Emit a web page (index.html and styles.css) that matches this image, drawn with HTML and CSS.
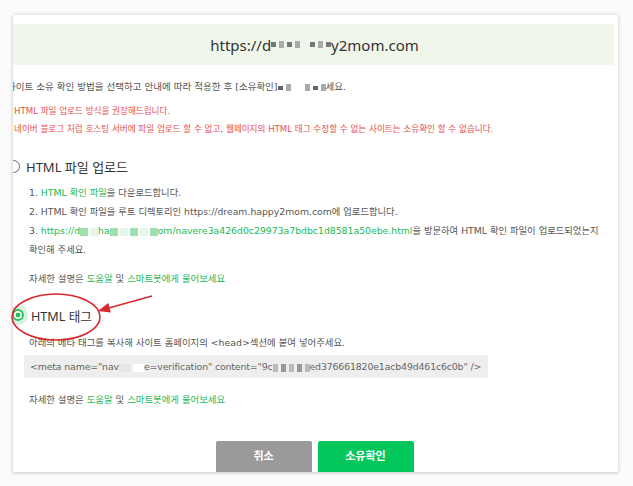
FILE: index.html
```html
<!DOCTYPE html>
<html lang="ko">
<head>
<meta charset="utf-8">
<title>소유확인</title>
<link rel="stylesheet" href="styles.css">
</head>
<body>
<div class="stage">
  <div class="card">
    <div class="site-bar">https://d<span class="redact dark"><i></i><i></i><i></i><i></i>&nbsp;<i></i><i></i><i></i></span>y2mom.com</div>
    <div class="content">
      <p class="intro">사이트 소유 확인 방법을 선택하고 안내에 따라 적용한 후 [소유확인]<span class="redact dark small"><i></i><i></i><i class="sp"></i><i></i><i></i><i></i></span>세요.</p>
      <p class="warn first">HTML 파일 업로드 방식을 권장해드립니다.</p>
      <p class="warn">네이버 블로그 처럼 호스팅 서버에 파일 업로드 할 수 없고, 웹페이지의 HTML 태그 수정할 수 없는 사이트는 소유확인 할 수 없습니다.</p>

      <div class="option first-opt">
        <span class="radio"></span>
        <span class="opt-title">HTML 파일 업로드</span>
      </div>
      <ol class="steps">
        <li>1. <span class="green">HTML 확인 파일</span>을 다운로드합니다.</li>
        <li>2. HTML 확인 파일을 루트 디렉토리인 https://dream.happy2mom.com에 업로드합니다.</li>
        <li>3. <span class="green">https://d<span class="redact lg"><i></i><i></i></span>ha<span class="redact lg"><i></i><i></i><i></i><i></i><i></i></span>om/navere3a426d0c29973a7bdbc1d8581a50ebe.html</span>을 방문하여 HTML 확인 파일이 업로드되었는지 확인해 주세요.</li>
      </ol>
      <p class="help">자세한 설명은 <span class="green">도움말</span> 및 <span class="green">스마트봇에게 물어보세요</span></p>

      <div class="option sel">
        <span class="radio on"></span>
        <span class="opt-title">HTML 태그</span>
      </div>
      <p class="desc">아래의 메타 태그를 복사해 사이트 홈페이지의 &lt;head&gt;섹션에 붙여 넣어주세요.</p>
      <div class="meta-box">&lt;meta name="nav<span class="redact lt"><i></i><i></i></span>e=verification" content="9c<span class="redact mid"><i></i><i></i><i></i><i></i><i></i></span>ed376661820e1acb49d461c6c0b" /&gt;</div>
      <p class="help help2">자세한 설명은 <span class="green">도움말</span> 및 <span class="green">스마트봇에게 물어보세요</span></p>

      <div class="buttons">
        <button class="btn cancel">취소</button>
        <button class="btn ok">소유확인</button>
      </div>
    </div>
  </div>

  <svg class="annot" width="633" height="486" viewBox="0 0 633 486">
    <ellipse cx="56" cy="317" rx="44" ry="23" fill="none" stroke="#d9282f" stroke-width="1.6"/>
    <line x1="152" y1="296" x2="107" y2="308.5" stroke="#d9282f" stroke-width="1.6"/>
    <polygon points="98,311 108.3,303 110.9,312.6" fill="#d9282f"/>
  </svg>
</div>
</body>
</html>
```
FILE: styles.css
```css
* { box-sizing: border-box; }
html, body { margin: 0; padding: 0; }
body {
  background: #fbfbfb;
  font-family: "DejaVu Sans", "Noto Sans CJK KR", sans-serif;
  color: #555;
}
.stage {
  position: relative;
  width: 633px;
  height: 486px;
  padding: 15px 0 0 13px;
  overflow: hidden;
}
.card {
  width: 605px;
  height: 457px;
  background: #fff;
  box-shadow: 0 0 4px rgba(0,0,0,0.18), 0 2px 3px rgba(0,0,0,0.08);
  overflow: hidden;
  padding-top: 9px;
}
.site-bar {
  height: 41px;
  margin-right: 4px;
  background: #f0f6ea;
  display: flex;
  align-items: center;
  justify-content: center;
  font-family: "Noto Sans", sans-serif;
  font-size: 15px;
  color: #333;
  padding-left: 2px;
}
.redact { display: inline-flex; align-items: center; gap: 3px; vertical-align: middle; }
.redact i { display: inline-block; width: 5px; height: 5px; background: #777; }
.redact.dark i:nth-child(2n) { background: #aaa; height: 7px; }
.redact.small i { width: 5px; height: 4px; background: #666; }
.redact.small i.sp { width: 8px; background: transparent; }
.redact.lg { gap: 2px; }
.redact.lg i { width: 8px; height: 8px; background: #9ee0b0; }
.redact.lg i:nth-child(2n) { background: #e4f6e8; }
.redact.lt { gap: 3px; }
.redact.lt i { width: 11px; height: 8px; background: #e6e6e6; }
.redact.lt i:nth-child(2) { background: #fff; }
.redact.mid { gap: 3px; }
.redact.mid i { width: 5px; height: 8px; background: #bbb; }
.redact.mid i:nth-child(2n) { background: #999; }

.content { padding: 0; }
p { margin: 0; }
.intro {
  margin: 14px 0 0 -6px;
  font-size: 9.5px;
  line-height: 15px;
  color: #555;
}
.warn {
  font-size: 8.6px;
  line-height: 18px;
  color: #e8504f;
  padding-left: 1px;
}
.warn.first { margin-top: 8px; }
.option {
  display: flex;
  align-items: center;
  height: 18px;
}
.option.first-opt { margin-top: 19px; }
.radio {
  flex: none;
  width: 13px;
  height: 13px;
  border: 1.3px solid #666;
  border-radius: 50%;
  margin-left: -6px;
  margin-right: 6px;
}
.opt-title {
  font-family: "Noto Sans", "Noto Sans CJK KR", sans-serif;
  font-size: 13px;
  color: #333;
}
.option.sel { margin-top: 20px; }
.radio.on {
  width: 12px;
  height: 12px;
  border: 2px solid #1fc45a;
  background: radial-gradient(circle, #1fc45a 0 2.2px, #fff 2.6px);
  box-shadow: 0 0 0 4px #d7f3df;
  margin-left: -1px;
  margin-right: 7px;
}
.option.sel .opt-title { font-size: 12.6px; }
.steps {
  list-style: none;
  margin: 8px 0 0 0;
  padding: 0 10px 0 16px;
  font-size: 9.3px;
  line-height: 19px;
  word-break: keep-all;
}
.green { color: #1db954; }
.help {
  margin: 12px 0 0 16px;
  font-size: 9.4px;
  line-height: 15px;
}
.help.help2 { margin-top: 14px; }
.desc {
  margin: 11px 0 0 16px;
  font-size: 9.4px;
  line-height: 15px;
}
.meta-box {
  margin: 5px 0 0 11px;
  width: 464px;
  height: 23px;
  background: #eeeeee;
  font-size: 9.4px;
  letter-spacing: -0.15px;
  line-height: 23px;
  padding-left: 6px;
  color: #666;
  white-space: nowrap;
  overflow: hidden;
}
.buttons {
  display: flex;
  justify-content: center;
  gap: 6px;
  margin-top: 34px;
  padding-right: 2px;
}
.btn {
  width: 96px;
  height: 34px;
  border: none;
  border-radius: 2px;
  color: #fff;
  font-family: "Noto Sans CJK KR", sans-serif;
  font-weight: 700;
  font-size: 11px;
  padding: 0 0 6px;
}
.btn.cancel { background: #9a9a9a; }
.btn.ok { background: #03c75a; }
.annot {
  position: absolute;
  left: 0;
  top: 0;
  pointer-events: none;
}
```
